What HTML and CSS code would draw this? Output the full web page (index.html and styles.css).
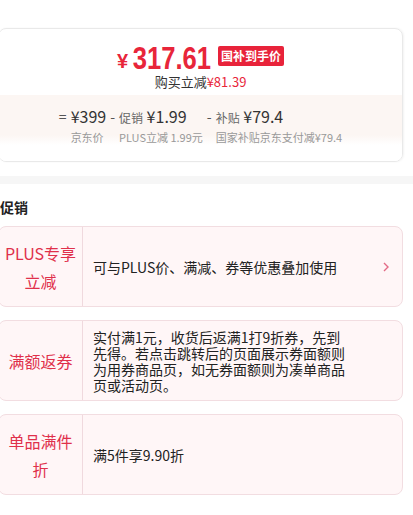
FILE: index.html
```html
<!DOCTYPE html>
<html lang="zh-CN">
<head>
  <meta charset="UTF-8">
  <title>价格与促销</title>
  <link rel="stylesheet" href="styles.css">
</head>
<body>

<div class="price-card">
  <div class="price-top">
    <div class="price-line">
      <span class="yen">¥</span><span class="num">317.61</span>
      <span class="tag">国补到手价</span>
    </div>
    <div class="save">购买立减<span class="red">¥81.39</span></div>
  </div>

  <div class="calc">
    <span class="op">=</span>
    <div class="col">
      <div class="val">¥399</div>
      <div class="lbl">京东价</div>
    </div>
    <span class="op">-</span>
    <div class="col">
      <div class="val"><small>促销</small> ¥1.99</div>
      <div class="lbl">PLUS立减 1.99元</div>
    </div>
    <span class="op">-</span>
    <div class="col">
      <div class="val"><small>补贴</small> ¥79.4</div>
      <div class="lbl">国家补贴京东支付减¥79.4</div>
    </div>
  </div>
</div>

<div class="band"></div>

<h3 class="sec-title">促销</h3>

<div class="promo">
  <div class="promo-name">PLUS专享立减</div>
  <div class="promo-text">
    <p>可与PLUS价、满减、券等优惠叠加使用</p>
    <svg class="arrow" width="6" height="10" viewBox="0 0 6 10"><polyline points="1,1 5,5 1,9" fill="none" stroke="#e36b86" stroke-width="1.4"/></svg>
  </div>
</div>

<div class="promo">
  <div class="promo-name">满额返券</div>
  <div class="promo-text">
    <p>实付满1元，收货后返满1打9折券，先到先得。若点击跳转后的页面展示券面额则为用券商品页，如无券面额则为凑单商品页或活动页。</p>
  </div>
</div>

<div class="promo">
  <div class="promo-name">单品满件折</div>
  <div class="promo-text">
    <p>满5件享9.90折</p>
  </div>
</div>

</body>
</html>
```

FILE: styles.css
```css
body {
  margin: 0;
  padding-top: 28px;
  background: #fff;
  font-family: "Noto Sans CJK SC", "Noto Sans", sans-serif;
  color: #222;
}
.price-card {
  margin: 0 10px 0 -2px;
  border: 1px solid #e9e9e9;
  border-radius: 8px;
  box-shadow: 1px 0 2px rgba(0,0,0,0.05);
  overflow: hidden;
}
.price-top {
  padding: 13px 0 6px;
  text-align: center;
}
.price-line {
  display: flex;
  justify-content: center;
  align-items: center;
  height: 32px;
  color: #e8253a;
}
.yen {
  font-family: "Liberation Sans", sans-serif;
  font-size: 20px;
  line-height: 20px;
  font-weight: bold;
  margin-top: 6px;
  margin-right: 4px;
}
.num {
  display: inline-block;
  font-family: "Liberation Sans", sans-serif;
  font-size: 32px;
  font-weight: bold;
  line-height: 32px;
  transform: scaleX(0.8);
  margin: 0 -9px;
}
.tag {
  margin-left: 6px;
  padding: 0 3px;
  height: 20px;
  line-height: 20px;
  background: #e8233a;
  color: #fff;
  font-size: 12px;
  font-weight: bold;
  border-radius: 2px;
  margin-top: -5px;
}
.save {
  margin-top: 1px;
  font-size: 13px;
  line-height: 14px;
  color: #333;
}
.red {
  color: #e8253a;
}
.calc {
  display: flex;
  justify-content: center;
  align-items: flex-start;
  gap: 4px;
  padding: 10px 0 14px;
  background: linear-gradient(#fcf6f3, #fcf6f3 40px, #fff 50px);
}
.op {
  font-size: 14px;
  line-height: 22px;
  color: #555;
}
.val {
  font-size: 16px;
  line-height: 22px;
  color: #333;
  white-space: nowrap;
}
.val small {
  font-size: 12px;
  line-height: 1;
  color: #666;
}
.lbl {
  font-size: 11px;
  line-height: 20px;
  color: #999;
  white-space: nowrap;
}
.band {
  height: 8px;
  margin-top: 14px;
  background: #f6f6f6;
}
.sec-title {
  margin: 13px 0 9px;
  font-size: 14px;
  line-height: 20px;
  font-weight: bold;
  color: #222;
}
.promo {
  display: flex;
  min-height: 79px;
  margin: 0 10px 13px -2px;
  border: 1px solid #f2dde1;
  border-radius: 8px;
  background: #fff6f7;
}
.promo-name {
  width: 75px;
  flex-shrink: 0;
  padding: 0 4px;
  display: flex;
  align-items: center;
  justify-content: center;
  text-align: center;
  border-right: 1px solid #f0d9de;
  font-size: 16px;
  line-height: 28px;
  color: #e0304b;
}
.promo-text {
  flex: 1;
  display: flex;
  align-items: center;
  justify-content: space-between;
  padding: 7px 13px 7px 10px;
}
.promo-text p {
  margin: 0;
  max-width: 256px;
  font-size: 14px;
  line-height: 16px;
  color: #222;
}
```
